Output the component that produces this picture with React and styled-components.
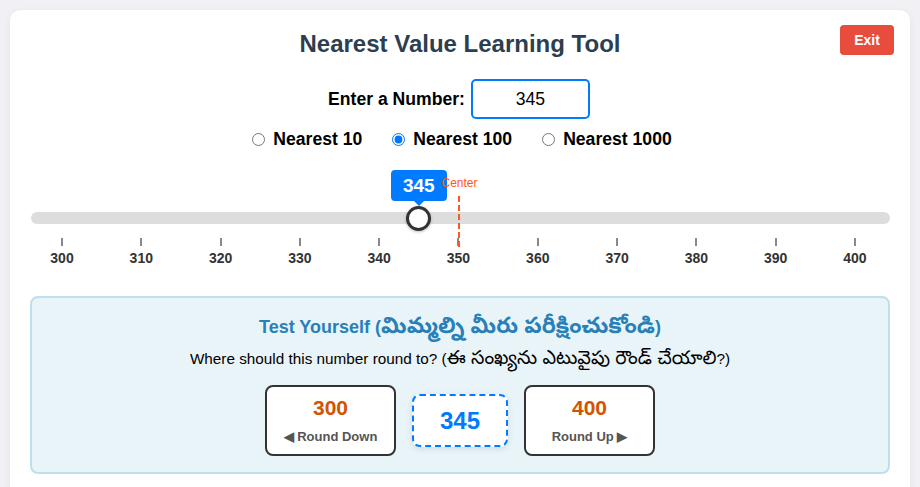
import React, { useState } from "react";
import styled, { createGlobalStyle } from "styled-components";

const GlobalStyle = createGlobalStyle`
  * { box-sizing: border-box; }
  html, body {
    margin: 0;
    padding: 0;
    background: #f0f0f5;
    font-family: "Liberation Sans", Arial, "Noto Sans", sans-serif;
  }
  body { padding: 10px; }
`;

const Card = styled.div`
  position: relative;
  background: #ffffff;
  border-radius: 10px;
  box-shadow: 0 2px 8px rgba(0, 0, 0, 0.06);
  padding: 20px 20px 20px;
  min-height: 500px;
`;

const Title = styled.h1`
  margin: 0 0 21px;
  text-align: center;
  font-size: 24px;
  line-height: 28px;
  font-weight: bold;
  color: #2c3e50;
`;

const ExitButton = styled.button`
  position: absolute;
  top: 15px;
  right: 16px;
  width: 54px;
  height: 30px;
  border: none;
  border-radius: 4px;
  background: #e74c3c;
  color: #ffffff;
  font-family: inherit;
  font-size: 14px;
  font-weight: bold;
  cursor: pointer;
`;

const InputRow = styled.div`
  display: flex;
  justify-content: center;
  align-items: center;
  gap: 6px;
  padding-right: 2px;
`;

const InputLabel = styled.label`
  font-size: 17.6px;
  font-weight: bold;
  color: #000;
`;

const NumberInput = styled.input`
  width: 119px;
  height: 40px;
  border: 2px solid #007bff;
  border-radius: 5px;
  text-align: center;
  font-family: inherit;
  font-size: 17.6px;
  color: #000;
  outline: none;
`;

const RadioRow = styled.div`
  display: flex;
  justify-content: center;
  align-items: center;
  gap: 30px;
  margin-top: 9px;
  padding-left: 4px;
  height: 22px;
`;

const RadioOption = styled.label`
  display: flex;
  align-items: center;
  gap: 8px;
  font-size: 17.6px;
  font-weight: bold;
  color: #000;
  cursor: pointer;

  input {
    margin: 0;
    width: 13px;
    height: 13px;
    accent-color: #0075ff;
  }
`;

const SliderArea = styled.div`
  position: relative;
  margin-top: 19px;
  padding-top: 43px;
  padding-left: 1px;
`;

const Track = styled.div`
  position: relative;
  height: 12px;
  border-radius: 6px;
  background: #dddddd;
`;

const Thumb = styled.div`
  position: absolute;
  top: 50%;
  width: 25px;
  height: 25px;
  margin-left: -12.5px;
  margin-top: -12.5px;
  border-radius: 50%;
  background: #ffffff;
  border: 3px solid #333333;
  box-shadow: 0 1px 3px rgba(0, 0, 0, 0.25);
`;

const Bubble = styled.div`
  position: absolute;
  bottom: 27px;
  left: 50%;
  transform: translateX(-50%);
  padding: 6px 0;
  width: 56px;
  text-align: center;
  border-radius: 4px;
  background: #007bff;
  color: #ffffff;
  font-size: 19px;
  line-height: 19px;
  font-weight: bold;

  &::after {
    content: "";
    position: absolute;
    left: 50%;
    bottom: -5px;
    margin-left: -5px;
    border-left: 5px solid transparent;
    border-right: 5px solid transparent;
    border-top: 5px solid #007bff;
  }
`;

const CenterMark = styled.div`
  position: absolute;
  top: 0;
  width: 2px;
  height: 73px;
  margin-top: 8px;
  margin-left: -1px;
`;

const CenterLine = styled.div`
  position: absolute;
  top: 19px;
  bottom: 0;
  left: 0;
  width: 2px;
  background: repeating-linear-gradient(
    to bottom,
    #ff5722 0,
    #ff5722 6px,
    transparent 6px,
    transparent 9px
  );
`;

const CenterLabel = styled.span`
  position: absolute;
  top: 0;
  left: 2px;
  transform: translateX(-50%);
  font-size: 12px;
  line-height: 12px;
  color: #ff5722;
  white-space: nowrap;
`;

const TickRow = styled.div`
  display: flex;
  justify-content: space-between;
  padding: 0 23px 0 19px;
  margin-top: 14px;
`;

const Tick = styled.div`
  width: 24px;
  display: flex;
  flex-direction: column;
  align-items: center;
`;

const TickMark = styled.div`
  width: 2px;
  height: 8px;
  background: #888888;
`;

const TickLabel = styled.span`
  margin-top: 4px;
  font-size: 14px;
  line-height: 16px;
  font-weight: bold;
  color: #333333;
`;

const QuizBox = styled.section`
  margin-top: 30px;
  background: #e8f4f8;
  border: 2px solid #bde0ec;
  border-radius: 8px;
  padding: 17px 20px 16px;
  text-align: center;
`;

const QuizTitle = styled.h2`
  margin: 0;
  font-size: 18px;
  line-height: 24px;
  font-weight: bold;
  color: #2980b9;
  font-family: "Liberation Sans", "Noto Sans", "Noto Sans Telugu", sans-serif;
`;

const QuizQuestion = styled.p`
  margin: 10px 0 0;
  font-size: 15.3px;
  line-height: 20px;
  color: #000;
  font-family: "Liberation Sans", "Noto Sans", "Noto Sans Telugu", sans-serif;
`;

/* Telugu glyphs are set a little larger so they sit level with the Latin text */
const Telugu = styled.span`
  font-size: 1.25em;
  line-height: 0;
`;

const Choices = styled.div`
  display: flex;
  justify-content: center;
  align-items: center;
  gap: 16px;
  margin-top: 16px;
`;

const ChoiceButton = styled.button`
  width: 131px;
  height: 71px;
  background: #ffffff;
  border: 2px solid #333333;
  border-radius: 8px;
  display: flex;
  flex-direction: column;
  align-items: center;
  justify-content: center;
  gap: 10px;
  padding: 0;
  font-family: inherit;
  cursor: pointer;
`;

const ChoiceValue = styled.span`
  font-size: 21px;
  line-height: 22px;
  font-weight: bold;
  color: #d35400;
`;

const ChoiceHint = styled.span`
  font-size: 13px;
  line-height: 15px;
  font-weight: bold;
  color: #555555;
`;

const CurrentValue = styled.div`
  width: 96px;
  height: 53px;
  border: 2px dashed #007bff;
  border-radius: 8px;
  background: #ffffff;
  box-shadow: 0 2px 6px rgba(0, 0, 0, 0.1);
  display: flex;
  align-items: center;
  justify-content: center;
  font-size: 24px;
  font-weight: bold;
  color: #007bff;
`;

const MIN = 300;
const MAX = 400;
const TICKS = Array.from({ length: 11 }, (_, i) => MIN + i * 10);

export default function App() {
  const [value, setValue] = useState("345");
  const [mode, setMode] = useState(100);

  const num = Number(value) || 0;
  const ratio = Math.min(1, Math.max(0, (num - MIN) / (MAX - MIN)));
  // thumb travels inside the track, inset by half its width on each end
  const thumbLeft = `calc(12.5px + (100% - 25px) * ${ratio})`;

  return (
    <>
      <GlobalStyle />
      <Card>
        <ExitButton>Exit</ExitButton>
        <Title>Nearest Value Learning Tool</Title>

        <InputRow>
          <InputLabel htmlFor="num">Enter a Number:</InputLabel>
          <NumberInput
            id="num"
            value={value}
            onChange={(e) => setValue(e.target.value)}
          />
        </InputRow>

        <RadioRow>
          {[10, 100, 1000].map((m) => (
            <RadioOption key={m}>
              <input
                type="radio"
                name="mode"
                checked={mode === m}
                onChange={() => setMode(m)}
              />
              Nearest {m}
            </RadioOption>
          ))}
        </RadioRow>

        <SliderArea>
          <Track>
            <Thumb style={{ left: thumbLeft }}>
              <Bubble>{value}</Bubble>
            </Thumb>
          </Track>
          <CenterMark style={{ left: "calc(1px + 19px + 12px + (100% - 1px - 42px - 24px) * 0.5)" }}>
            <CenterLabel>Center</CenterLabel>
            <CenterLine />
          </CenterMark>
          <TickRow>
            {TICKS.map((t) => (
              <Tick key={t}>
                <TickMark />
                <TickLabel>{t}</TickLabel>
              </Tick>
            ))}
          </TickRow>
        </SliderArea>

        <QuizBox>
          <QuizTitle>
            Test Yourself (<Telugu>మిమ్మల్ని మీరు పరీక్షించుకోండి</Telugu>)
          </QuizTitle>
          <QuizQuestion>
            Where should this number round to? (<Telugu>ఈ సంఖ్యను ఎటువైపు రౌండ్ చేయాలి</Telugu>?)
          </QuizQuestion>
          <Choices>
            <ChoiceButton>
              <ChoiceValue>300</ChoiceValue>
              <ChoiceHint>◀ Round Down</ChoiceHint>
            </ChoiceButton>
            <CurrentValue>{value}</CurrentValue>
            <ChoiceButton>
              <ChoiceValue>400</ChoiceValue>
              <ChoiceHint>Round Up ▶</ChoiceHint>
            </ChoiceButton>
          </Choices>
        </QuizBox>
      </Card>
    </>
  );
}
